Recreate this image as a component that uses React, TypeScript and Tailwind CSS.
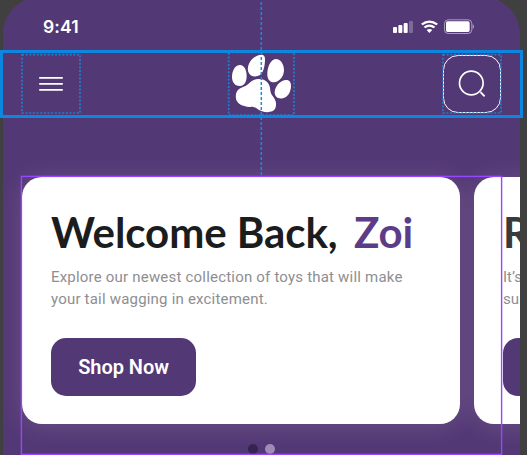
function StatusIcons() {
  return (
    <svg className="mt-[19px] h-[15px] w-[82px]" viewBox="123 57 246 45" fill="white">
      <rect x="123" y="81" width="12" height="18" rx="3" />
      <rect x="139" y="75" width="12" height="24" rx="3" />
      <rect x="155" y="69" width="12" height="30" rx="3" />
      <rect x="171" y="63" width="12" height="36" rx="3" opacity=".25" />
      <path d="M207 71Q232 52 258 71L253 76Q232 61 212 76Z" />
      <path d="M215 80Q232 67 250 80L245 85Q232 76 220 85Z" />
      <path d="M224 90Q232 84 241 90L232 99Z" />
      <rect x="277.5" y="59.5" width="82" height="41" rx="11" fill="none" stroke="white" strokeWidth="3" opacity=".5" />
      <rect x="282" y="64" width="71" height="32" rx="5" />
      <path d="M362 73Q366 74 366 80Q366 85 362 87Z" opacity=".5" />
    </svg>
  );
}

function Paw() {
  return (
    <svg className="h-[63px] w-[65px]" viewBox="27 21 195 189" fill="white">
      <path d="M58 60C72 58 80 75 80 92C80 108 75 122 60 123C45 124 36 111 36 96C36 79 44 62 58 60Z" />
      <path d="M124 29C133 29 136 36 135 47C134 65 130 84 119 91C108 97 90 96 85 81C80 67 87 51 99 40C107 33 116 29 124 29Z" />
      <path d="M167 42C183 42 192 59 192 75C192 93 179 111 162 112C148 112 141 101 142 84C143 65 152 43 167 42Z" />
      <path d="M201 105C210 106 213 114 213 124C212 144 202 157 188 160C173 163 164 154 164 142C164 124 182 103 201 105Z" />
      <path d="M115 102C132 101 147 110 150 128C151 138 151 144 158 153C167 164 171 175 166 190C161 202 142 204 126 199C111 194 108 185 94 185C77 188 58 180 51 169C45 158 46 140 57 132C66 126 76 125 84 118C94 108 101 103 115 102Z" />
    </svg>
  );
}

function MenuIcon() {
  return (
    <svg className="h-4 w-6" viewBox="0 0 24 16" stroke="white" strokeWidth="1.7" strokeLinecap="round">
      <path d="M.8 1.8H23.2M.8 7.8H23.2M.8 13.8H23.2" />
    </svg>
  );
}

function SearchIcon() {
  return (
    <svg className="h-7 w-7" viewBox="0 0 28 28" fill="none" stroke="white" strokeWidth="1.7">
      <circle cx="13.3" cy="13" r="11.8" />
      <path d="M22.5 22.2L26.6 26.3" strokeWidth="1.9" />
    </svg>
  );
}

export default function App() {
  return (
    <div className="relative h-[455px] w-[527px] overflow-hidden bg-[#404040] font-['Roboto',sans-serif]">
      <main className="-mt-[3px] ml-[3px] h-[458px] w-[517px] overflow-hidden rounded-t-[37px] bg-[#533876] pt-[3px]">
        <div className="flex h-[50px] items-start justify-between pr-[45px] pl-10 text-white">
          <time className="mt-[15px] font-['Inter',sans-serif] text-[17.5px] leading-6 font-semibold tracking-[0.15px]">9:41</time>
          <StatusIcons />
        </div>
        <header className="flex h-[68px] items-start justify-between pr-[19px] pl-[18px]">
          <button aria-label="Menu" className="mt-1 flex h-[59px] w-[59px] items-center justify-center"><MenuIcon /></button>
          <div className="mt-0.5"><Paw /></div>
          <button aria-label="Search" className="mt-[5px] flex h-[58px] w-[58px] items-center justify-center rounded-[15px] border-[1.5px] border-white"><SearchIcon /></button>
        </header>
        <div className="flex gap-3.5 pt-[59px] pl-[19px]">
          <article className="h-[247px] w-[438px] shrink-0 rounded-[20px] bg-white px-[29px] pt-[30px] shadow-[0_2px_26px_rgba(255,240,225,0.14)]">
            <h1 className="flex h-[50px] font-['Lato',sans-serif] text-[42px] leading-[50px] font-bold tracking-[-0.06px] whitespace-nowrap text-[#1b1c1e]">
              <span className="w-[303px]">Welcome Back,</span><span className="text-[#5c3c88]">Zoi</span>
            </h1>
            <p className="mt-[9px] text-[15px] leading-[22px] font-normal tracking-[0.2px] whitespace-nowrap text-[#8e8e91]">Explore our newest collection of toys that will make<br />your tail wagging in excitement.</p>
            <button className="mt-[28px] h-[58px] w-[145px] rounded-[15px] bg-[#533876] text-[20px] font-semibold tracking-[-0.05px] text-white">Shop Now</button>
          </article>
          <article className="h-[247px] w-[438px] shrink-0 rounded-[20px] bg-white px-[29px] pt-[30px] shadow-[0_2px_26px_rgba(255,240,225,0.14)]">
            <h2 className="h-[50px] font-['Lato',sans-serif] text-[42px] leading-[50px] font-bold text-[#3a3a3c]">R</h2>
            <p className="mt-[9px] text-[15px] leading-[22px] font-normal text-[#8e8e91]">It’s<br />su</p>
            <button aria-label="View offer" className="mt-[28px] h-[58px] w-[145px] rounded-[15px] bg-[#533876]" />
          </article>
        </div>
        <div className="mt-5 flex justify-center gap-[7px]">
          <span className="h-2.5 w-2.5 rounded-full bg-[#36234f]" />
          <span className="h-2.5 w-2.5 rounded-full bg-[#a08bb6]" />
        </div>
      </main>
      <div className="absolute top-[50px] left-0 h-[68px] w-[523px] border-[3px] border-[#0d86e0]" />
      <svg className="pointer-events-none absolute inset-0 h-[455px] w-[527px]" fill="none" stroke="#168be1">
        <path d="M261.3 2V175" strokeWidth="1.5" strokeDasharray="3 2" />
        <g strokeWidth="1.7" strokeDasharray="2 1.67" opacity=".85">
          <rect x="22" y="54.7" width="58" height="58.3" />
          <rect x="228.7" y="52.5" width="65.3" height="62.5" />
          <rect x="443" y="54.7" width="58" height="58.3" />
        </g>
      </svg>
      <svg className="pointer-events-none absolute inset-0 h-[455px] w-[527px]" fill="none" stroke="#9747ff" strokeWidth="1.4">
        <rect x="21.4" y="176.4" width="480.2" height="278" />
      </svg>
    </div>
  );
}
